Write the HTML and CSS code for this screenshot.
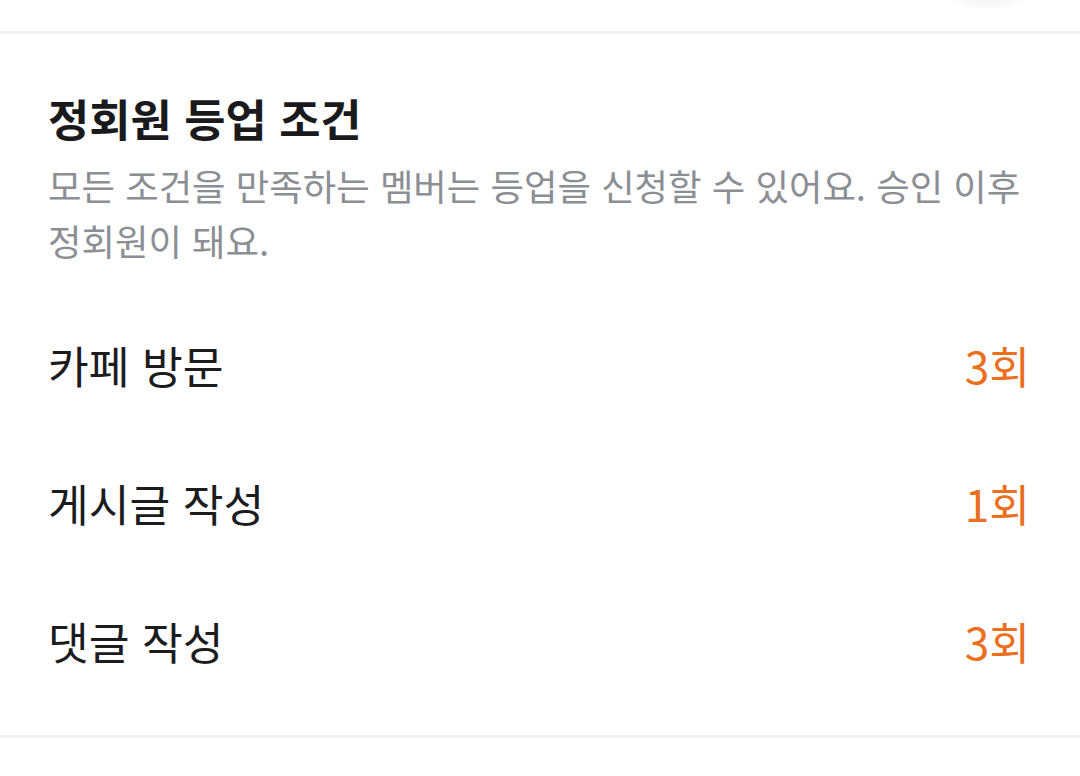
FILE: index.html
```html
<!DOCTYPE html>
<html lang="ko">
<head>
<meta charset="utf-8">
<link rel="stylesheet" href="styles.css">
</head>
<body>
<div class="top">
  <div class="shadow-blob"></div>
</div>
<div class="divider"></div>
<section class="section">
  <h2 class="title">정회원 등업 조건</h2>
  <p class="desc">모든 조건을 만족하는 멤버는 등업을 신청할 수 있어요. 승인 이후 정회원이 돼요.</p>
  <ul class="rows">
    <li class="row"><span class="label">카페 방문</span><span class="count">3회</span></li>
    <li class="row"><span class="label">게시글 작성</span><span class="count">1회</span></li>
    <li class="row"><span class="label">댓글 작성</span><span class="count">3회</span></li>
  </ul>
</section>
<div class="divider"></div>
</body>
</html>
```
FILE: styles.css
```css
html, body {
  margin: 0;
  padding: 0;
  background: #ffffff;
}
body {
  font-family: "Noto Sans CJK KR", "Noto Sans", sans-serif;
  color: #1b1b1d;
}
.top {
  position: relative;
  height: 31px;
  overflow: hidden;
}
.shadow-blob {
  position: absolute;
  left: 935px;
  top: -40px;
  width: 105px;
  height: 50px;
  border-radius: 50%;
  background: radial-gradient(ellipse at center, rgba(0,0,0,0.06) 0%, rgba(0,0,0,0.03) 50%, rgba(0,0,0,0) 75%);
}
.divider {
  height: 3px;
  background: #f1f1f2;
}
.section {
  padding: 56px 50px 25px 48px;
}
.title {
  margin: 0;
  font-size: 44.8px;
  font-weight: 700;
  line-height: 56px;
  color: #1a1a1c;
}
.desc {
  margin: 12px 0 0 0;
  font-size: 36.4px;
  line-height: 55px;
  color: #8b8e93;
  font-weight: 400;
  word-break: keep-all;
}
.rows {
  list-style: none;
  margin: 28px 0 0 0;
  padding: 0;
}
.row {
  height: 138px;
  display: flex;
  align-items: center;
  justify-content: space-between;
  font-size: 44.3px;
  line-height: 56px;
}
.label {
  color: #1c1c1e;
}
.count {
  color: #ea6f1f;
}
```
